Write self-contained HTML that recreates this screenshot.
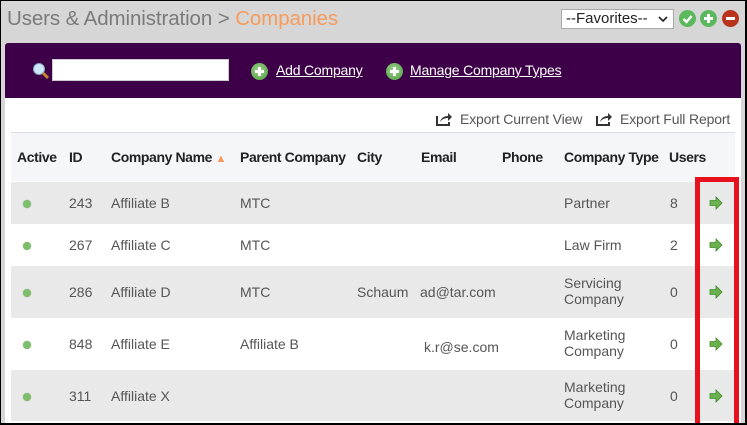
<!DOCTYPE html>
<html><head><meta charset="utf-8"><style>
*{margin:0;padding:0;box-sizing:border-box}
body{width:747px;height:425px;overflow:hidden;background:#d6d6d6;font-family:"Liberation Sans",Arial,sans-serif;position:relative}
.frame{position:absolute;left:0;top:0;width:747px;height:425px;border:1px solid #000;border-right:2px solid #000;border-bottom:2px solid #000;z-index:10;pointer-events:none}
.a{position:absolute;white-space:nowrap}
.title{left:7px;top:7px;font-size:20.5px;color:#7a7a7a;letter-spacing:-0.1px}
.title span{color:#f79b5c}
.sel{left:561px;top:9px;width:113px;height:20px;background:#fff;border:1px solid #aaa;font-size:15px;color:#222;padding-left:4px;line-height:18px}
.ci{position:absolute;width:17px;height:17px;border-radius:50%;top:10px}
.bar{left:5px;top:43px;width:736px;height:55px;background:#3d0048;border-radius:3px 3px 0 0}
.panel{left:5px;top:98px;width:736px;height:325px;background:#fff}
.inp{left:52px;top:59px;width:177px;height:22px;background:#fff;border:1px solid #ccc}
.lnk{color:#fff;text-decoration:underline;font-size:14px;top:62px;letter-spacing:-0.2px}
.plus{position:absolute;width:17px;height:17px;border-radius:50%;background:radial-gradient(circle at 45% 40%,#9ad08a,#4f9c3f);top:63px}
.plus:before{content:"";position:absolute;left:4px;top:7px;width:9px;height:3px;background:#fff}
.plus:after{content:"";position:absolute;left:7px;top:4px;width:3px;height:9px;background:#fff}
.exp{top:111px;font-size:14px;color:#555;letter-spacing:-0.15px}
.hdr{left:11px;top:132px;width:724px;height:49px;background:#f5f6f8;border-top:1px solid #ddd}
.th{top:149px;font-size:14px;font-weight:bold;color:#222;letter-spacing:-0.4px}
.row{position:absolute;left:11px;width:724px}
.td{font-size:14px;color:#555;position:absolute}
.dot{position:absolute;left:12px;width:8px;height:8px;border-radius:50%;background:#7cbf6a;box-shadow:0 0 1px #999}
.red{left:695px;top:177px;width:44px;height:246px;border:5px solid #e8121f;border-bottom:none}
.arr{position:absolute;left:15px}
</style></head><body>
<div class="a title">Users &amp; Administration &gt; <span>Companies</span></div>
<div class="a sel">--Favorites--<svg style="position:absolute;right:5px;top:6px" width="10" height="7"><path d="M1 1l4 4 4-4" stroke="#222" stroke-width="1.6" fill="none"/></svg></div>
<div class="ci" style="left:679px;background:#5cb85c"><svg width="17" height="17"><path d="M4.5 9l3 3 5-6" stroke="#fff" stroke-width="2.4" fill="none"/></svg></div>
<div class="ci" style="left:700px;background:#5cb85c"><svg width="17" height="17"><path d="M8.5 4v9M4 8.5h9" stroke="#fff" stroke-width="3"/></svg></div>
<div class="ci" style="left:722px;background:#b8331c"><svg width="17" height="17"><path d="M4 8.5h9" stroke="#fff" stroke-width="3"/></svg></div>
<div class="a bar"></div>
<svg class="a" style="left:32px;top:62px" width="18" height="18"><circle cx="7" cy="7" r="5.5" fill="#cfe6fb" stroke="#8ab" stroke-width="1"/><path d="M11 11l5 5" stroke="#c9822e" stroke-width="3"/></svg>
<div class="a inp"></div>
<div class="plus" style="left:251px"></div><div class="a lnk" style="left:276px">Add Company</div>
<div class="plus" style="left:386px"></div><div class="a lnk" style="left:410px">Manage Company Types</div>
<div class="a panel"></div>
<svg class="a" style="left:435px;top:111px" width="18" height="16"><path d="M2 5v9h12v-3" stroke="#333" stroke-width="2" fill="none"/><path d="M5 11c1-4 4-6 8-6V2l4 4-4 4V7c-3 0-6 1-8 4z" fill="#333"/></svg>
<div class="a exp" style="left:460px">Export Current View</div>
<svg class="a" style="left:595px;top:111px" width="18" height="16"><path d="M2 5v9h12v-3" stroke="#333" stroke-width="2" fill="none"/><path d="M5 11c1-4 4-6 8-6V2l4 4-4 4V7c-3 0-6 1-8 4z" fill="#333"/></svg>
<div class="a exp" style="left:620px">Export Full Report</div>
<div class="a hdr"></div>
<div class="a th" style="left:17px">Active</div>
<div class="a th" style="left:69px">ID</div>
<div class="a th" style="left:111px">Company Name <span style="color:#f79b5c;font-size:11px">&#9650;</span></div>
<div class="a th" style="left:240px">Parent Company</div>
<div class="a th" style="left:357px">City</div>
<div class="a th" style="left:421px">Email</div>
<div class="a th" style="left:502px">Phone</div>
<div class="a th" style="left:564px">Company Type</div>
<div class="a th" style="left:669px">Users</div>

<div class="row" style="top:182px;height:42px;background:#e9e9e9">
<div class="dot" style="top:18px"></div><div class="td" style="left:58px;top:13px">243</div><div class="td" style="left:100px;top:13px">Affiliate B</div><div class="td" style="left:229px;top:13px">MTC</div><div class="td" style="left:553px;top:13px">Partner</div><div class="td" style="left:659px;top:13px">8</div></div>
<div class="row" style="top:224px;height:42px;background:#fff">
<div class="dot" style="top:18px"></div><div class="td" style="left:58px;top:13px">267</div><div class="td" style="left:100px;top:13px">Affiliate C</div><div class="td" style="left:229px;top:13px">MTC</div><div class="td" style="left:553px;top:13px">Law Firm</div><div class="td" style="left:659px;top:13px">2</div></div>
<div class="row" style="top:266px;height:52px;background:#e9e9e9">
<div class="dot" style="top:23px"></div><div class="td" style="left:58px;top:18px">286</div><div class="td" style="left:100px;top:18px">Affiliate D</div><div class="td" style="left:229px;top:18px">MTC</div><div class="td" style="left:346px;top:18px">Schaum</div><div class="td" style="left:409px;top:18px">ad@tar.com</div><div class="td" style="left:553px;top:9px;line-height:16px">Servicing<br>Company</div><div class="td" style="left:659px;top:18px">0</div></div>
<div class="row" style="top:318px;height:52px;background:#fff">
<div class="dot" style="top:23px"></div><div class="td" style="left:58px;top:18px">848</div><div class="td" style="left:100px;top:18px">Affiliate E</div><div class="td" style="left:229px;top:18px">Affiliate B</div><div class="td" style="left:413px;top:21px">k.r@se.com</div><div class="td" style="left:553px;top:9px;line-height:16px">Marketing<br>Company</div><div class="td" style="left:659px;top:18px">0</div></div>
<div class="row" style="top:370px;height:51px;background:#e9e9e9">
<div class="dot" style="top:23px"></div><div class="td" style="left:58px;top:18px">311</div><div class="td" style="left:100px;top:18px">Affiliate X</div><div class="td" style="left:553px;top:9px;line-height:16px">Marketing<br>Company</div><div class="td" style="left:659px;top:18px">0</div></div>

<svg class="a" style="left:709px;top:196px" width="14" height="14"><path d="M1 4.5h6V1l6 6-6 6V9.5H1z" fill="#6cb14f" stroke="#3f8a2a" stroke-width="0.8"/></svg>
<svg class="a" style="left:709px;top:238px" width="14" height="14"><path d="M1 4.5h6V1l6 6-6 6V9.5H1z" fill="#6cb14f" stroke="#3f8a2a" stroke-width="0.8"/></svg>
<svg class="a" style="left:709px;top:285px" width="14" height="14"><path d="M1 4.5h6V1l6 6-6 6V9.5H1z" fill="#6cb14f" stroke="#3f8a2a" stroke-width="0.8"/></svg>
<svg class="a" style="left:709px;top:337px" width="14" height="14"><path d="M1 4.5h6V1l6 6-6 6V9.5H1z" fill="#6cb14f" stroke="#3f8a2a" stroke-width="0.8"/></svg>
<svg class="a" style="left:709px;top:389px" width="14" height="14"><path d="M1 4.5h6V1l6 6-6 6V9.5H1z" fill="#6cb14f" stroke="#3f8a2a" stroke-width="0.8"/></svg>
<div class="a red"></div>
<div class="frame"></div>
</body></html>
